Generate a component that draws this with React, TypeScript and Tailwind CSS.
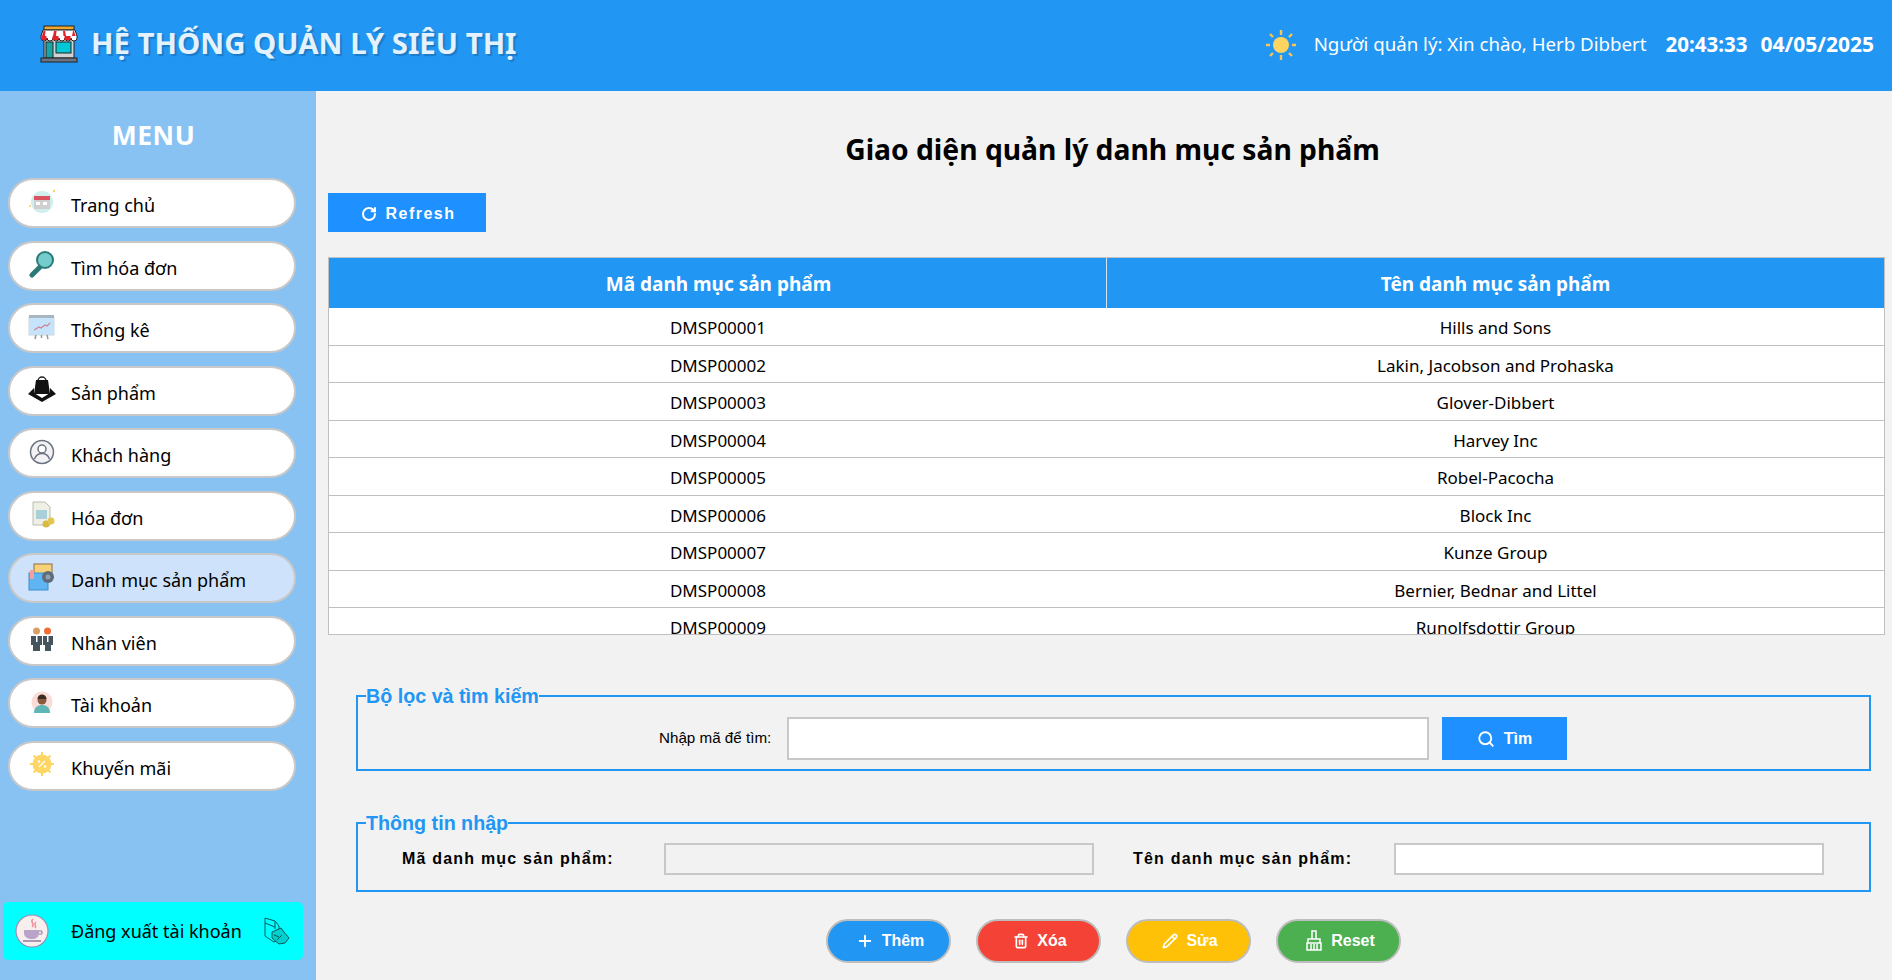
import React from "react";
import { Search, RotateCw, Plus, Trash2, Pencil } from "lucide-react";

const sans = "font-['Noto_Sans','Open_Sans',sans-serif]";
const arial = "font-['Liberation_Sans',Arial,sans-serif]";

function StoreIcon() {
  return (
    <svg width="38" height="38" viewBox="0 0 38 38">
      <rect x="4" y="1" width="30" height="4" fill="#f0a830" stroke="#222" />
      <rect x="4" y="12" width="30" height="21" fill="#cfd3d6" stroke="#222" />
      <rect x="6" y="17" width="7" height="16" fill="#18a5a5" stroke="#222" />
      <rect x="16" y="17" width="15" height="11" fill="#00c8d7" stroke="#222" />
      <path d="M3 5h32l2 6v2a3 3 0 0 1-6 0 3 3 0 0 1-6 0 3 3 0 0 1-6 0 3 3 0 0 1-6 0 3 3 0 0 1-6 0 3 3 0 0 1-6 0v-2z" fill="#fff" stroke="#222" />
      <path d="M1.500 11h5v4h-5zM12.500 11h6v4h-6zM24.500 11h6v4h-6zM3.500 6h2l-.5 5H2zM14 6h2.500l-.5 5h-3zM23 6h2l1 5h-2.500zM33 6h1l1.500 5H32z" fill="#e8202a" />
      <rect x="1" y="33" width="36" height="4" fill="#6b7280" stroke="#222" />
    </svg>
  );
}

function SunIcon({ size = 30 }: { size?: number }) {
  return (
    <svg width={size} height={size} viewBox="0 0 30 30">
      <g stroke="#f7c653" strokeWidth="2.400" strokeLinecap="butt">
        <path d="M15 0v5M15 25v5M0 15h4M26 15h4M4 4l3 3M23 23l3 3M26 4l-3 3M7 23l-3 3" />
      </g>
      <circle cx="15" cy="15" r="8" fill="#ffd561" />
    </svg>
  );
}

function MenuIcon({ name }: { name: string }) {
  switch (name) {
    case "home":
      return (
        <svg width="28" height="28" viewBox="0 0 28 28">
          <circle cx="14" cy="14" r="11" fill="#cfeeee" />
          <rect x="6" y="11" width="16" height="10" fill="#cfcfcf" />
          <rect x="6" y="8" width="16" height="4" fill="#d9535f" />
          <rect x="8" y="14" width="4" height="3" fill="#fff" />
          <rect x="15" y="14" width="4" height="3" fill="#fff" />
          <circle cx="26" cy="3" r="1.200" fill="#f6d65a" />
          <circle cx="2" cy="18" r="1" fill="#f6d65a" />
        </svg>
      );
    case "search":
      return (
        <svg width="28" height="28" viewBox="0 0 28 28">
          <path d="M12 17L4 25" stroke="#2b7a78" strokeWidth="5" strokeLinecap="round" />
          <circle cx="17" cy="10" r="8" fill="#74cccc" stroke="#2b7a78" strokeWidth="2" />
        </svg>
      );
    case "chart":
      return (
        <svg width="28" height="28" viewBox="0 0 28 28">
          <rect x="1" y="4" width="25" height="18" fill="#c5e4fb" stroke="#cfd8dc" />
          <rect x="1" y="2" width="25" height="3" fill="#a8b6bd" />
          <path d="M6 17l5-3 2 1 4-3 2 1 3-3" fill="none" stroke="#d08296" strokeWidth="1.200" />
          <path d="M8 22l-1 4M19 22l1 4M13.500 22v3" stroke="#8d9aa1" strokeWidth="1.500" />
        </svg>
      );
    case "bag":
      return (
        <svg width="28" height="28" viewBox="0 0 28 28">
          <path d="M10 6a4 4 0 0 1 8 0v3" fill="none" stroke="#222" strokeWidth="1.500" />
          <path d="M8 5h12l2 14H6z" fill="#111" />
          <path d="M6 13L0 19l14 8 14-8-6-6v5l-8 5-8-5z" fill="#111" />
        </svg>
      );
    case "user":
      return (
        <svg width="28" height="28" viewBox="0 0 28 28" fill="none" stroke="#6b7280" strokeWidth="1.500">
          <circle cx="14" cy="14" r="11.500" fill="#f2f2f4" />
          <circle cx="14" cy="11" r="4" fill="#fff" />
          <path d="M6.500 21c1.500-4 4-5.500 7.500-5.500s6 1.500 7.500 5.500" />
        </svg>
      );
    case "invoice":
      return (
        <svg width="28" height="28" viewBox="0 0 28 28">
          <path d="M5 2h12l5 5v18H5z" fill="#eef0e6" stroke="#b8bcb0" />
          <rect x="8" y="10" width="11" height="9" fill="#a9cfd8" />
          <circle cx="18" cy="24" r="3.500" fill="#d9b93f" />
          <circle cx="23" cy="21" r="3.500" fill="#e3c652" />
        </svg>
      );
    case "folder":
      return (
        <svg width="28" height="28" viewBox="0 0 28 28">
          <rect x="6" y="1" width="18" height="15" fill="#f8d27a" stroke="#8d6e3f" />
          <rect x="1" y="10" width="19" height="17" fill="#5fb4f2" stroke="#3d8fcc" />
          <path d="M2 7h4v9H2z" fill="#f2a0a0" />
          <circle cx="20" cy="14" r="6" fill="#5e6b7a" />
          <circle cx="20" cy="14" r="2.500" fill="#8fa0b0" />
        </svg>
      );
    case "staff":
      return (
        <svg width="28" height="28" viewBox="0 0 28 28">
          <circle cx="8.500" cy="6" r="3.500" fill="#d9a066" />
          <circle cx="19.500" cy="6" r="3.500" fill="#ef6c33" />
          <path d="M3 11h11v9h-2v6H5v-6H3z" fill="#46545e" />
          <path d="M15 11h10v9h-2v6h-6v-6h-2z" fill="#46545e" />
          <path d="M8 11h1.500v6H8zM19 11h1.500v6H19z" fill="#fff" />
        </svg>
      );
    case "account":
      return (
        <svg width="28" height="28" viewBox="0 0 28 28">
          <circle cx="14" cy="14" r="10.500" fill="#f8dcd8" />
          <path d="M6 25c0-6 4-8 8-8s8 2 8 8z" fill="#5fb6b6" />
          <circle cx="14" cy="12" r="4.500" fill="#8a5a3c" />
          <path d="M9.500 11a4.500 4.500 0 0 1 9 0z" fill="#3b2a20" />
        </svg>
      );
    case "promo":
      return (
        <svg width="28" height="28" viewBox="0 0 28 28">
          <g stroke="#fdd663" strokeWidth="2">
            <path d="M14 2v24M2 14h24M5.500 5.500l17 17M22.500 5.500l-17 17" />
          </g>
          <circle cx="14" cy="14" r="9.500" fill="#fdd663" />
          <path d="M11 17l6-6" stroke="#fff" strokeWidth="1.200" />
          <circle cx="11" cy="11.500" r="1.200" fill="#fff" />
          <circle cx="17" cy="16.500" r="1.200" fill="#fff" />
        </svg>
      );
    default:
      return null;
  }
}

function JavaIcon() {
  return (
    <svg width="34" height="34" viewBox="0 0 34 34">
      <circle cx="17" cy="17" r="16" fill="#f7eeee" stroke="#a38ab5" strokeWidth="1.200" />
      <path d="M18 5c-4 3 3 5-1 8M21 8c-3 2 1 3-1 6" fill="none" stroke="#ee8f9b" strokeWidth="1.500" />
      <path d="M9 16h15v3c0 4-3 6-7 6s-8-2-8-6z" fill="#b9a3c9" />
      <path d="M24 17h3v3h-3" fill="none" stroke="#8f7aa3" />
      <path d="M8 27h18" stroke="#8f7aa3" strokeWidth="1.500" />
    </svg>
  );
}

function LogoutIcon() {
  return (
    <svg width="28" height="32" viewBox="0 0 28 32" fill="none" stroke="#0a5a5a" strokeWidth="1">
      <path d="M2 3l10 3 4 5v14l-5 2-9-6z" />
      <path d="M12 6v8M2 8l10 4" />
      <path d="M9 17l9-4 3 4 5 6-4 5-6 1-7-6z" fill="#00cfcf" />
      <path d="M14 25l5-5M11 20l5 2" />
    </svg>
  );
}

function BroomIcon() {
  return (
    <svg width="18" height="22" viewBox="0 0 18 22" fill="none" stroke="#fff" strokeWidth="1.500">
      <path d="M7 1h4v8H7zM3 9h12v4H3zM2 13h14v7H2zM6 14v6M9 14v6M12 14v6" />
    </svg>
  );
}

const menuItems = [
  { label: "Trang chủ", icon: "home" },
  { label: "Tìm hóa đơn", icon: "search" },
  { label: "Thống kê", icon: "chart" },
  { label: "Sản phẩm", icon: "bag" },
  { label: "Khách hàng", icon: "user" },
  { label: "Hóa đơn", icon: "invoice" },
  { label: "Danh mục sản phẩm", icon: "folder", active: true },
  { label: "Nhân viên", icon: "staff" },
  { label: "Tài khoản", icon: "account" },
  { label: "Khuyến mãi", icon: "promo" },
];

const rows = [
  ["DMSP00001", "Hills and Sons"],
  ["DMSP00002", "Lakin, Jacobson and Prohaska"],
  ["DMSP00003", "Glover-Dibbert"],
  ["DMSP00004", "Harvey Inc"],
  ["DMSP00005", "Robel-Pacocha"],
  ["DMSP00006", "Block Inc"],
  ["DMSP00007", "Kunze Group"],
  ["DMSP00008", "Bernier, Bednar and Littel"],
  ["DMSP00009", "Runolfsdottir Group"],
];

function Sidebar() {
  return (
    <aside className="w-[316px] shrink-0 bg-[#88c2f3] flex flex-col">
      <div className={`${sans} text-center text-white font-bold text-[26.500px] leading-[34px] tracking-[0.5px] pt-[27px] pr-[9px] mb-[26px]`}>
        MENU
      </div>
      <nav className="flex flex-col gap-[12.500px] pl-[8px] pr-[20px]">
        {menuItems.map((item) => (
          <div
            key={item.label}
            className={`h-[50px] rounded-[25px] border-2 border-[#c8c8c8] flex items-center pl-[18px] ${item.active ? "bg-[#cfe2fb]" : "bg-white"}`}
          >
            <div className="w-[28px] h-[28px] -mt-[3px] shrink-0">
              <MenuIcon name={item.icon} />
            </div>
            <span className={`${sans} ml-[15px] mt-[5px] text-[18px] text-black`}>{item.label}</span>
          </div>
        ))}
      </nav>
      <div className="mt-auto mb-[20px] ml-[3px] w-[300px] h-[58px] rounded-[5px] bg-[#00ffff] flex items-center pl-[12px]">
        <JavaIcon />
        <span className={`${sans} ml-[22px] text-[18px] text-black flex-1`}>Đăng xuất tài khoản</span>
        <div className="mr-[12px]">
          <LogoutIcon />
        </div>
      </div>
    </aside>
  );
}

function Main() {
  const legend = `${arial} -ml-[2px] text-[19.700px] leading-[22px] font-bold text-[#2196f3]`;
  const label = `${arial} text-[16px] font-bold tracking-[1.200px] text-black`;
  const action = `${arial} w-[125px] h-[44px] rounded-[22px] border-2 border-[#bdbdbd] flex items-center justify-center gap-[8px] pl-[4px] text-white font-bold text-[16px]`;
  return (
    <main className="flex-1 min-w-0 bg-[#f2f2f2] flex flex-col pl-[12px] pr-[7px]">
      <h1 className={`${sans} text-center text-black font-bold text-[28.250px] leading-[38px] mt-[39px] pl-[12px]`}>
        Giao diện quản lý danh mục sản phẩm
      </h1>
      <button className={`${arial} mt-[25px] w-[158px] h-[39px] bg-[#1e90ff] text-white font-bold text-[16px] tracking-[1.500px] flex items-center justify-center gap-[8px] pt-[2px] pl-[3px]`}>
        <RotateCw size={16} strokeWidth={3} />
        Refresh
      </button>
      <div className="mt-[25px] h-[378px] bg-white border border-[#c0c0c0] overflow-hidden">
        <div className={`${sans} h-[50px] bg-[#2196f3] grid grid-cols-[778px_1fr] text-white font-bold text-[19px]`}>
          <div className="flex items-center justify-center border-r border-[#d0e4f7] pt-[3px] pl-[2px]">Mã danh mục sản phẩm</div>
          <div className="flex items-center justify-center pt-[3px]">Tên danh mục sản phẩm</div>
        </div>
        {rows.map((row) => (
          <div key={row[0]} className={`${sans} h-[37.500px] grid grid-cols-[778px_1fr] items-center text-center text-[17px] text-black border-b border-[#c0c0c0] pt-[3px]`}>
            <div>{row[0]}</div>
            <div>{row[1]}</div>
          </div>
        ))}
      </div>

      <fieldset className="mt-[50px] ml-[28px] mr-[14px] h-[86px] border-2 border-[#2196f3] px-[10px]">
        <legend className={legend}>Bộ lọc và tìm kiếm</legend>
        <div className="flex items-center h-[43px] mt-[10px]">
          <label className={`${arial} ml-[291px] w-[128px] text-[15.200px] text-black`}>Nhập mã để tìm:</label>
          <input className="w-[642px] h-[43px] bg-white border-2 border-[#c8c8c8]" />
          <button className={`${arial} ml-[13px] w-[125px] h-[43px] bg-[#1e90ff] text-white font-bold text-[16px] flex items-center justify-center gap-[9px]`}>
            <Search size={18} strokeWidth={2.500} />
            Tìm
          </button>
        </div>
      </fieldset>

      <fieldset className="mt-[41px] ml-[28px] mr-[14px] h-[80px] border-2 border-[#2196f3] px-[10px]">
        <legend className={legend}>Thông tin nhập</legend>
        <div className="flex items-center h-[32px] mt-[9px]">
          <label className={`${label} ml-[34px] w-[262px]`}>Mã danh mục sản phẩm:</label>
          <input disabled className="w-[430px] h-[32px] bg-[#f2f2f2] border-2 border-[#c8c8c8]" />
          <label className={`${label} ml-[39px] w-[261px]`}>Tên danh mục sản phẩm:</label>
          <input className="w-[430px] h-[32px] bg-white border-2 border-[#c8c8c8]" />
        </div>
      </fieldset>

      <div className="mt-[27px] flex justify-center gap-[25px] pl-[13px]">
        <button className={`${action} bg-[#2196f3]`}>
          <Plus size={18} strokeWidth={2.500} />
          Thêm
        </button>
        <button className={`${action} bg-[#f44336]`}>
          <Trash2 size={16} strokeWidth={2.500} />
          Xóa
        </button>
        <button className={`${action} bg-[#ffc107]`}>
          <Pencil size={16} strokeWidth={2.500} />
          Sửa
        </button>
        <button className={`${action} bg-[#4caf50]`}>
          <BroomIcon />
          Reset
        </button>
      </div>
    </main>
  );
}

export default function App() {
  return (
    <div className="w-[1892px] h-[980px] flex flex-col overflow-hidden">
      <header className="h-[91px] shrink-0 bg-[#2196f3] flex items-center pl-[40px] pr-[18px] pb-[4px]">
        <StoreIcon />
        <span className={`${sans} ml-[13px] text-[#e3f2fd] font-bold text-[29.400px] [text-shadow:2px_2px_1px_rgba(0,0,0,0.18)]`}>
          HỆ THỐNG QUẢN LÝ SIÊU THỊ
        </span>
        <div className="ml-auto flex items-center text-white pt-[2px]">
          <SunIcon />
          <span className={`${sans} ml-[18px] text-[18.700px]`}>Người quản lý: Xin chào, Herb Dibbert</span>
          <span className={`${sans} ml-[19px] text-[20.500px] font-bold`}>20:43:33</span>
          <span className={`${sans} ml-[13px] text-[21px] font-bold`}>04/05/2025</span>
        </div>
      </header>
      <div className="flex-1 min-h-0 flex">
        <Sidebar />
        <Main />
      </div>
    </div>
  );
}
